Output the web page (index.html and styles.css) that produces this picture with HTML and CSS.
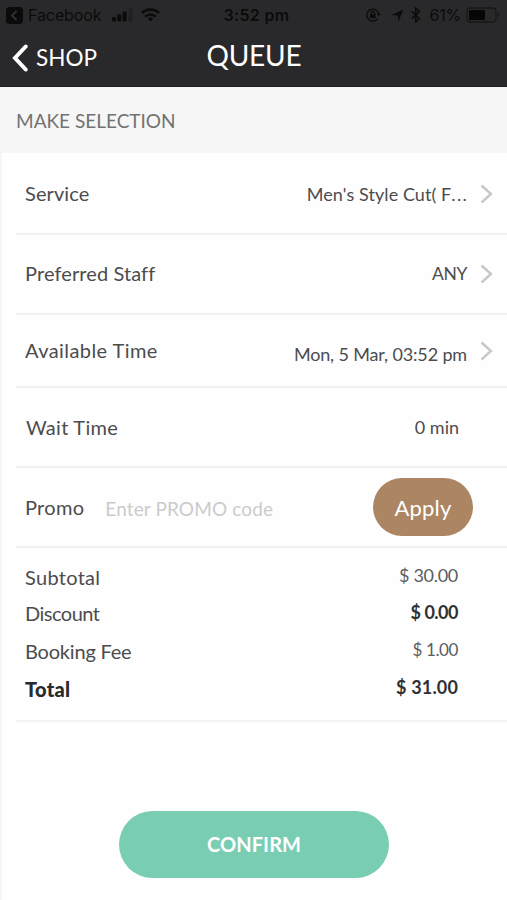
FILE: index.html
```html
<!DOCTYPE html>
<html lang="en">
<head>
<meta charset="utf-8">
<title>Queue</title>
<link rel="stylesheet" href="styles.css">
</head>
<body>
<div class="app">
  <header class="header">
    <div class="status">
      <div class="status-left">
        <svg class="back-app" width="17" height="17" viewBox="0 0 17 17"><rect width="17" height="17" rx="3.5" fill="#0b0b0c"/><path d="M10.5 4 6 8.5l4.5 4.5" fill="none" stroke="#303032" stroke-width="2"/></svg>
        <span class="carrier">Facebook</span>
        <svg class="signal" width="22" height="14" viewBox="0 0 22 14" fill="#0b0b0c"><rect x="0" y="9" width="4" height="4.5" rx="1"/><rect x="5.3" y="6.5" width="4" height="7" rx="1"/><rect x="10.6" y="3.5" width="4" height="10" rx="1"/><rect x="16.5" y="0.5" width="4" height="13" rx="1" fill="#202022"/></svg>
        <svg class="wifi" width="19" height="14" viewBox="0 0 19 14" fill="none" stroke="#0b0b0c" stroke-width="2.6"><path d="M1 5.2a12 12 0 0 1 17 0"/><path d="M4.2 8.7a7.5 7.5 0 0 1 10.6 0"/><path d="M9.5 13.5 6.8 10.7a3.8 3.8 0 0 1 5.4 0z" fill="#0b0b0c" stroke="none"/></svg>
      </div>
      <span class="clock">3:52 pm</span>
      <div class="status-right">
        <svg class="lock" width="15" height="14" viewBox="0 0 15 14" fill="none" stroke="#0b0b0c" stroke-width="1.3"><path d="M11.8 10.6A6 6 0 1 1 12.8 6"/><path d="m10.8 5.6 2.1 2.6 1.7-2.8z" fill="#0b0b0c" stroke="none"/><rect x="4.2" y="6.2" width="5.4" height="4" fill="#0b0b0c" stroke="none"/><path d="M5.2 6.5V5a1.7 1.7 0 0 1 3.4 0v1.500"/></svg>
        <svg class="location" width="13" height="13" viewBox="0 0 13 13" fill="#0b0b0c"><path d="M12.5.5 7.4 12.4 6.8 6.4.6 5.9z"/></svg>
        <svg class="bluetooth" width="10" height="16" viewBox="0 0 10 16" fill="none" stroke="#0b0b0c" stroke-width="1.5"><path d="m.8 4.3 7.6 7.2L4.8 15V1l3.6 3.5-7.6 7.2"/></svg>
        <span class="percent">61%</span>
        <svg class="battery" width="34" height="16" viewBox="0 0 34 16"><rect x="1" y="1" width="29" height="14" rx="3.500" fill="none" stroke="#171718" stroke-width="1.3"/><rect x="3" y="3" width="16" height="10" rx="1" fill="#060606"/><path d="M31.8 5.3c1.7.8 1.7 4.6 0 5.4z" fill="#171718"/></svg>
      </div>
    </div>
    <nav class="nav">
      <a class="back">
        <svg width="17" height="30" viewBox="0 0 17 30" fill="none" stroke="#fff" stroke-width="4" stroke-linecap="round"><path d="M14.700 3.500 4 15l10.700 11.500"/></svg>
        <span>SHOP</span>
      </a>
      <h1 class="title">QUEUE</h1>
    </nav>
  </header>

  <main class="content">
    <h2 class="section">MAKE SELECTION</h2>

    <div class="rows">
      <div class="row row-service">
        <span class="label l-service">Service</span>
        <span class="value v-service">Men's Style Cut( F<span class="dots">...</span></span>
        <svg class="chevron" width="13" height="20" viewBox="0 0 13 20"><path d="m1.500 1.500 9.500 8.500-9.500 8.500"/></svg>
      </div>
      <div class="row row-staff">
        <span class="label l-staff">Preferred Staff</span>
        <span class="value v-staff">ANY</span>
        <svg class="chevron" width="13" height="20" viewBox="0 0 13 20"><path d="m1.500 1.500 9.500 8.500-9.500 8.500"/></svg>
      </div>
      <div class="row row-time">
        <span class="label l-time">Available Time</span>
        <span class="value v-time">Mon, 5 Mar, 03:52 pm</span>
        <svg class="chevron" width="13" height="20" viewBox="0 0 13 20"><path d="m1.500 1.500 9.500 8.500-9.500 8.500"/></svg>
      </div>
      <div class="row row-wait">
        <span class="label l-wait">Wait Time</span>
        <span class="value v-wait">0 min</span>
      </div>
      <div class="row row-promo">
        <span class="label l-promo">Promo</span>
        <span class="placeholder">Enter PROMO code</span>
        <button class="apply">Apply</button>
      </div>
      <div class="totals">
        <div class="line"><span class="label l-subtotal">Subtotal</span><span class="amount">$ 30.00</span></div>
        <div class="line"><span class="label l-discount">Discount</span><span class="amount strong">$ 0.00</span></div>
        <div class="line"><span class="label l-fee">Booking Fee</span><span class="amount fee">$ 1.00</span></div>
        <div class="line"><span class="label l-total">Total</span><span class="amount strong sum">$ 31.00</span></div>
      </div>
    </div>

    <button class="confirm">CONFIRM</button>
  </main>
</div>
</body>
</html>
```
FILE: styles.css
```css
* { box-sizing: border-box; }
body {
  margin: 0;
  background: #fefefe;
  color: #4c4c4e;
  font-family: Lato, "Liberation Sans", sans-serif;
}
.app { height: 900px; overflow: hidden; display: flex; flex-direction: column; }
h1, h2 { margin: 0; font-weight: 400; }
svg { display: block; flex: none; }
span { white-space: nowrap; }
button { border: 0; padding: 0; color: #fff; font-family: inherit; }

.header { height: 87px; background: #29292b; border-bottom: 1px solid #1d1c1d; flex: none; }
.status {
  height: 30px;
  display: grid;
  grid-template-columns: 1fr auto 1fr;
  align-items: center;
  padding: 0 7px 0 6px;
  color: #0b0b0c;
  font-family: Inter, "Liberation Sans", sans-serif;
  font-size: 16px;
}
.status-left, .status-right { display: flex; align-items: center; }
.status-right { justify-content: flex-end; }
.carrier { margin-left: 5px; letter-spacing: -0.1px; }
.signal { margin-left: 11px; }
.wifi { margin-left: 7px; }
.clock { font-weight: 600; letter-spacing: 0.3px; padding-left: 7px; }
.location { margin-left: 10px; }
.bluetooth { margin-left: 7px; }
.percent { margin-left: 8px; letter-spacing: -0.2px; }
.battery { margin-left: 5px; }

.nav { height: 56px; display: grid; grid-template-columns: 1fr auto 1fr; align-items: center; color: #fff; }
.back { display: flex; align-items: center; gap: 8px; padding-left: 11px; font-size: 22.5px; }
.back span { padding-bottom: 2px; }
.title { font-size: 28px; line-height: 32px; padding: 0 0 6px 1px; letter-spacing: -0.2px; }

.content { display: flex; flex-direction: column; align-items: stretch; border-left: 2px solid #f6f6f6; flex: 1; }
.section {
  height: 66px;
  line-height: 67px;
  padding-left: 14px;
  background: #f6f6f6;
  color: #727272;
  font-size: 19px;
}
.rows { margin-left: 14px; }
.row {
  display: flex;
  align-items: center;
  height: 80px;
  padding: 0 14px 0 9px;
  border-bottom: 2px solid #f1f1f1;
}
.row-service { height: 82px; padding-top: 2px; }
.row-time { height: 73px; }
.label { font-size: 20px; line-height: 24px; letter-spacing: 0.1px; }
.l-service, .l-staff, .l-time { padding-bottom: 2px; }
.l-time { letter-spacing: 0.43px; }
.l-wait { letter-spacing: 0.27px; padding-left: 1px; }
.l-promo { letter-spacing: 0.3px; }
.l-subtotal { letter-spacing: 0.3px; }
.l-discount { letter-spacing: -0.5px; }
.l-fee { letter-spacing: -0.2px; }
.l-total { font-weight: 900; letter-spacing: 0.3px; color: #29292b; }
.l-discount, .l-fee { margin-top: -1px; }
.value { margin-left: auto; font-size: 18px; line-height: 22px; }
.v-service { letter-spacing: 0.08px; }
.dots { letter-spacing: 1.3px; margin-right: -1px; }
.v-staff { letter-spacing: -0.4px; font-size: 17.5px; }
.v-time { padding-top: 6px; letter-spacing: -0.15px; }
.v-wait { margin-right: 34px; }
.chevron { margin-left: 13px; fill: none; stroke: #c8c8c8; stroke-width: 2.4; }
.placeholder { margin-left: 21px; padding-top: 2px; font-size: 19px; letter-spacing: 0.12px; color: #cbcbce; }
.apply {
  width: 100px;
  height: 58px;
  margin-left: auto;
  margin-right: 20px;
  border-radius: 29px;
  background: #ac8562;
  font-size: 22px;
  letter-spacing: 0.2px;
}
.totals { height: 174px; padding: 17px 49px 0 9px; border-bottom: 2px solid #f3f3f3; }
.line { display: flex; justify-content: space-between; align-items: flex-start; height: 37.3px; }
.amount { font-size: 18px; line-height: 20px; letter-spacing: -0.3px; color: #5d5d5f; }
.strong { font-weight: 700; letter-spacing: -0.5px; color: #303032; }
.fee { font-size: 17px; letter-spacing: -0.4px; }
.sum { letter-spacing: 0.15px; }
.confirm {
  width: 270px;
  height: 67px;
  margin: 89px 0 0 117px;
  padding-bottom: 2px;
  border-radius: 34px;
  background: #79cdb3;
  font-size: 20px;
  font-weight: 700;
  letter-spacing: 0.1px;
}
```
